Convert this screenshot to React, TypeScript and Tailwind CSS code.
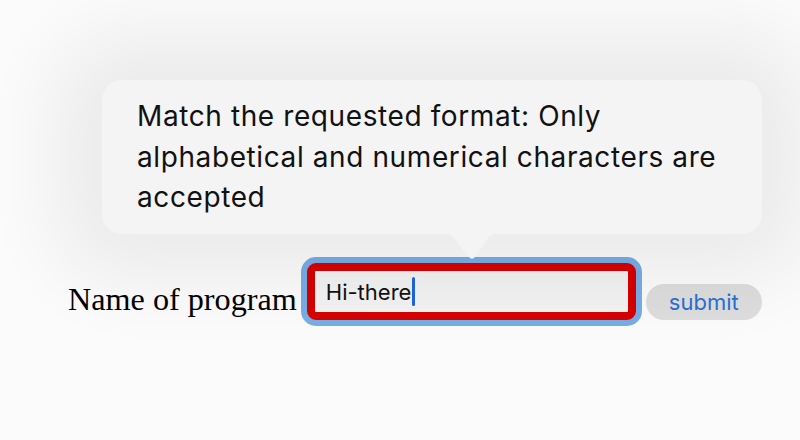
export default function App() {
  return (
    <div className="relative h-[440px] w-[800px] overflow-hidden bg-[#fbfbfb] font-['Inter',sans-serif]">
      {/* validation bubble */}
      <div className="absolute left-[102px] top-[80px] h-[154px] w-[660px] rounded-[20px] bg-[#f4f4f4] shadow-[0_0_80px_45px_rgba(0,0,0,0.065)]">
        <p className="pl-[35px] pr-[30px] pt-[16px] text-[28px] leading-[40.5px] tracking-[0.6px] text-[#111]">
          Match the requested format: Only alphabetical and numerical characters are accepted
        </p>
      </div>
      <svg
        className="absolute left-[440px] top-[233px]"
        width="62"
        height="28"
        viewBox="0 0 62 28"
      >
        <path
          d="M0 0 C8 0 12 2 16 8 L29 24 Q32 27.5 35 24 L46 8 C50 2 54 0 62 0 Z"
          fill="#f4f4f4"
        />
      </svg>

      {/* form row */}
      <div className="flex items-end pl-[68px] pt-[263px]">
        <label className="mb-[5px] mr-[10px] font-['Liberation_Serif',serif] text-[32.2px] leading-none text-black">
          Name of program
        </label>
        <div className="flex h-[57px] w-[329px] items-center rounded-[9px] border-[8px] border-[#d70000] bg-[#f2f2f2] pl-[11px] ring-[6px] ring-[#78ade6]">
          <span className="text-[22px] leading-none text-[#111]">Hi-there</span>
          <span className="ml-[1px] h-[29px] w-[3px] rounded-full bg-[#1f66dd]" />
        </div>
        <button className="ml-[10px] flex h-[36px] w-[116px] items-center justify-center rounded-full bg-[#dddddd] text-[22px] leading-none text-[#2c6fd3]">
          submit
        </button>
      </div>
    </div>
  );
}
